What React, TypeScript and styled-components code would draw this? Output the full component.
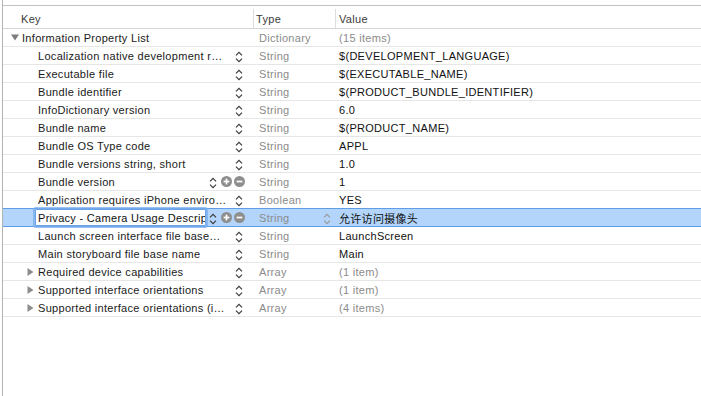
import React from 'react';
import styled, { createGlobalStyle, css } from 'styled-components';

const GlobalStyle = createGlobalStyle`
  html, body {
    margin: 0;
    padding: 0;
    background: #ffffff;
  }
  body {
    font-family: "Liberation Sans", "Noto Sans CJK SC", Arial, sans-serif;
    font-size: 11px;
    letter-spacing: 0.3px;
    color: #1a1a1a;
    -webkit-font-smoothing: antialiased;
  }
`;

const COLUMNS = '250px 82px 1fr';

const Frame = styled.div`
  width: 698px;
  height: 391px;
  margin-left: 2px;
  padding-top: 5px;
  border-left: 1px solid #b4b4b4;
  overflow: hidden;
`;

const Table = styled.div`
  border-top: 1px solid #c2c2c2;
`;

const Header = styled.div`
  display: grid;
  grid-template-columns: ${COLUMNS};
  height: 22px;
  border-bottom: 1px solid #d6d6d6;
  color: #3a3a3a;
`;

const HeaderCell = styled.div<{ $first?: boolean }>`
  display: flex;
  align-items: center;
  margin: 3px 0 0;
  padding-left: ${(p) => (p.$first ? '18px' : '2px')};
  border-left: ${(p) => (p.$first ? 'none' : '1px solid #dedede')};
  &:last-child {
    padding-left: 3px;
  }
`;

const Row = styled.div<{ $selected?: boolean }>`
  display: grid;
  grid-template-columns: ${COLUMNS};
  height: 17px;
  border-bottom: 1px solid #e6e6e6;
  position: relative;
  ${(p) =>
    p.$selected &&
    css`
      background: #b3d5fc;
      border-bottom-color: #5f9de8;
      box-shadow: 0 -1px 0 #5f9de8;
    `}
`;

const KeyCell = styled.div<{ $level: number }>`
  display: flex;
  align-items: center;
  min-width: 0;
  padding-left: ${(p) => 7 + p.$level * 16}px;
  padding-right: 8px;
`;

const Disclosure = styled.span`
  width: 12px;
  flex: none;
  display: flex;
  align-items: center;
`;

const KeyText = styled.span`
  flex: 1;
  min-width: 0;
  white-space: nowrap;
  overflow: hidden;
`;

const EditField = styled.div`
  flex: 1;
  min-width: 0;
  height: 17px;
  margin-left: -3px;
  margin-right: 1px;
  box-sizing: border-box;
  padding: 0 2px;
  background: #ffffff;
  border: 1px solid #6aa3e6;
  box-shadow: 0 0 0 2px rgba(120, 172, 238, 0.75);
  border-radius: 1px;
  display: flex;
  align-items: center;
  white-space: nowrap;
  overflow: hidden;
  color: #111;
`;

const Controls = styled.span`
  display: flex;
  align-items: center;
  gap: 1px;
  flex: none;
`;

const ControlBox = styled.span`
  width: 12px;
  height: 17px;
  display: flex;
  align-items: center;
  justify-content: center;
`;

const TypeCell = styled.div`
  display: flex;
  align-items: center;
  justify-content: space-between;
  padding-left: 6px;
  padding-right: 2px;
  color: #8b8b8b;
`;

const ValueCell = styled.div<{ $muted?: boolean }>`
  display: flex;
  align-items: center;
  padding-left: 4px;
  white-space: nowrap;
  color: ${(p) => (p.$muted ? '#8b8b8b' : '#111111')};
`;

const Stepper = ({ color = '#3d3d3d' }: { color?: string }) => (
  <svg width="8" height="12" viewBox="0 0 8 12" style={{ marginTop: 2 }}>
    <path d="M1 4.3 L4 1.3 L7 4.3" fill="none" stroke={color} strokeWidth="1.2" />
    <path d="M1 7.7 L4 10.7 L7 7.7" fill="none" stroke={color} strokeWidth="1.2" />
  </svg>
);

const PlusMinus = ({ plus }: { plus?: boolean }) => (
  <svg width="11" height="11" viewBox="0 0 11 11">
    <circle cx="5.5" cy="5.5" r="5.5" fill="#8e8e8e" />
    <path d="M2.6 5.5 H8.4" stroke="#fff" strokeWidth="1.7" />
    {plus && <path d="M5.5 2.6 V8.4" stroke="#fff" strokeWidth="1.7" />}
  </svg>
);

const Triangle = ({ open }: { open?: boolean }) =>
  open ? (
    <svg width="8" height="7" viewBox="0 0 8 7" style={{ marginLeft: 1 }}>
      <polygon points="0,0.5 8,0.5 4,6.5" fill="#7d7d7d" />
    </svg>
  ) : (
    <svg width="7" height="8" viewBox="0 0 7 8" style={{ marginLeft: 1 }}>
      <polygon points="0.5,0 6.5,4 0.5,8" fill="#8d8d8d" />
    </svg>
  );

type Item = {
  key: string;
  level: number;
  disclosure?: 'open' | 'closed';
  type: string;
  value: string;
  muted?: boolean;
  controls?: 'stepper' | 'full';
  selected?: boolean;
};

const items: Item[] = [
  { key: 'Information Property List', level: 0, disclosure: 'open', type: 'Dictionary', value: '(15 items)', muted: true },
  { key: 'Localization native development r…', level: 1, type: 'String', value: '$(DEVELOPMENT_LANGUAGE)', controls: 'stepper' },
  { key: 'Executable file', level: 1, type: 'String', value: '$(EXECUTABLE_NAME)', controls: 'stepper' },
  { key: 'Bundle identifier', level: 1, type: 'String', value: '$(PRODUCT_BUNDLE_IDENTIFIER)', controls: 'stepper' },
  { key: 'InfoDictionary version', level: 1, type: 'String', value: '6.0', controls: 'stepper' },
  { key: 'Bundle name', level: 1, type: 'String', value: '$(PRODUCT_NAME)', controls: 'stepper' },
  { key: 'Bundle OS Type code', level: 1, type: 'String', value: 'APPL', controls: 'stepper' },
  { key: 'Bundle versions string, short', level: 1, type: 'String', value: '1.0', controls: 'stepper' },
  { key: 'Bundle version', level: 1, type: 'String', value: '1', controls: 'full' },
  { key: 'Application requires iPhone enviro…', level: 1, type: 'Boolean', value: 'YES', controls: 'stepper' },
  { key: 'Privacy - Camera Usage Description', level: 1, type: 'String', value: '允许访问摄像头', controls: 'full', selected: true },
  { key: 'Launch screen interface file base…', level: 1, type: 'String', value: 'LaunchScreen', controls: 'stepper' },
  { key: 'Main storyboard file base name', level: 1, type: 'String', value: 'Main', controls: 'stepper' },
  { key: 'Required device capabilities', level: 1, disclosure: 'closed', type: 'Array', value: '(1 item)', muted: true, controls: 'stepper' },
  { key: 'Supported interface orientations', level: 1, disclosure: 'closed', type: 'Array', value: '(1 item)', muted: true, controls: 'stepper' },
  { key: 'Supported interface orientations (i…', level: 1, disclosure: 'closed', type: 'Array', value: '(4 items)', muted: true, controls: 'stepper' },
];

const App = () => (
  <>
    <GlobalStyle />
    <Frame>
      <Table>
        <Header>
          <HeaderCell $first>Key</HeaderCell>
          <HeaderCell>Type</HeaderCell>
          <HeaderCell>Value</HeaderCell>
        </Header>
        {items.map((item) => (
          <Row key={item.key} $selected={item.selected}>
            <KeyCell $level={item.level}>
              <Disclosure>{item.disclosure && <Triangle open={item.disclosure === 'open'} />}</Disclosure>
              {item.selected ? <EditField>{item.key}</EditField> : <KeyText>{item.key}</KeyText>}
              {item.controls && (
                <Controls>
                  <ControlBox>
                    <Stepper />
                  </ControlBox>
                  {item.controls === 'full' && (
                    <>
                      <ControlBox>
                        <PlusMinus plus />
                      </ControlBox>
                      <ControlBox>
                        <PlusMinus />
                      </ControlBox>
                    </>
                  )}
                </Controls>
              )}
            </KeyCell>
            <TypeCell>
              {item.type}
              {item.selected && (
                <ControlBox>
                  <Stepper color="#9a9a9a" />
                </ControlBox>
              )}
            </TypeCell>
            <ValueCell $muted={item.muted}>{item.value}</ValueCell>
          </Row>
        ))}
      </Table>
    </Frame>
  </>
);

export default App;
